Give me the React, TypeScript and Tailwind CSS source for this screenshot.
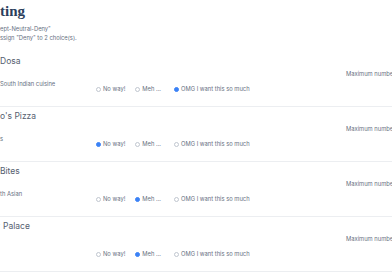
import React from 'react';

type Choice = {
  prefix: string;
  name: string;
  namePad?: string;
  subPrefix?: string;
  sub?: string;
  picked: number;
};

const choices: Choice[] = [
  { prefix: 'Masala ', name: 'Dosa', subPrefix: '', sub: 'South Indian cuisine', picked: 2 },
  { prefix: 'Domin', name: "o's Pizza", subPrefix: 'Fast food, pizza', sub: 's', picked: 0 },
  { prefix: 'Bombay ', name: 'Bites', subPrefix: 'Sou', sub: 'th Asian', picked: 1 },
  { prefix: 'Curry', name: 'Palace', namePad: 'pl-[3px]', picked: 1 },
];

const options = ['No way!', 'Meh ...', 'OMG I want this so much'];

// clipped-off start of a line, kept as real text left of the visible edge
function Clipped({ hidden, shown, className }: { hidden: string; shown: string; className?: string }) {
  return (
    <div className="flex whitespace-nowrap">
      <span className="w-[60px] shrink-0 text-right">{hidden}</span>
      <span className={className}>{shown}</span>
    </div>
  );
}

function Radio({ label, checked, wide }: { label: string; checked: boolean; wide?: boolean }) {
  return (
    <label className={`flex items-center gap-[2px] whitespace-nowrap ${wide ? 'pr-[3px]' : ''}`}>
      <span
        className={
          checked
            ? 'w-[5px] h-[5px] rounded-full bg-[#3b82f6] border border-[#3b82f6]'
            : 'w-[5px] h-[5px] rounded-full border border-[#c0c6cf] bg-white'
        }
      />
      <span>{label}</span>
    </label>
  );
}

export default function App() {
  return (
    <div className="w-[392px] h-[272px] overflow-hidden bg-white" style={{ fontFamily: 'Inter, "Noto Sans", sans-serif' }}>
      <div className="-ml-[60px] w-[700px]">
        <div className="h-[51px]">
          <div
            className="mt-[1px] text-[15px] leading-[20px] font-bold text-[#2c3e5c]"
            style={{ fontFamily: '"Liberation Serif", serif' }}
          >
            <Clipped hidden="Vo" shown="ting" />
          </div>
          <div className="mt-[2.5px] text-[5.8px] leading-[9px] text-[#67707f]">
            <Clipped hidden='Voting type: "Acc' shown='ept-Neutral-Deny"' />
            <Clipped hidden="You can a" shown={'ssign "Deny" to 2 choice(s).'} />
          </div>
        </div>

        {choices.map((c, i) => (
          <div key={i} className="flex h-[55px] border-b border-[#eceef1]">
            <div className="w-[156px] shrink-0">
              <div className="pt-[4px] text-[8.5px] leading-[11px] text-[#556070]">
                <Clipped hidden={c.prefix} shown={c.name} className={c.namePad} />
              </div>
              {c.sub && (
                <div className="mt-[13px] text-[5.8px] leading-[8px] text-[#67707f]">
                  <Clipped hidden={c.subPrefix ?? ''} shown={c.sub} />
                </div>
              )}
            </div>
            <div className="w-[250px] shrink-0 pt-[33px]">
              <div className="flex gap-[10px] text-[5.8px] leading-[8px] text-[#67707f]">
                {options.map((o, j) => (
                  <Radio key={j} label={o} checked={c.picked === j} wide={j === 1} />
                ))}
              </div>
            </div>
            <div className="pt-[18px] text-[5.8px] leading-[8px] text-[#67707f] whitespace-nowrap">
              Maximum number of Deny: 2
            </div>
          </div>
        ))}
      </div>
    </div>
  );
}
